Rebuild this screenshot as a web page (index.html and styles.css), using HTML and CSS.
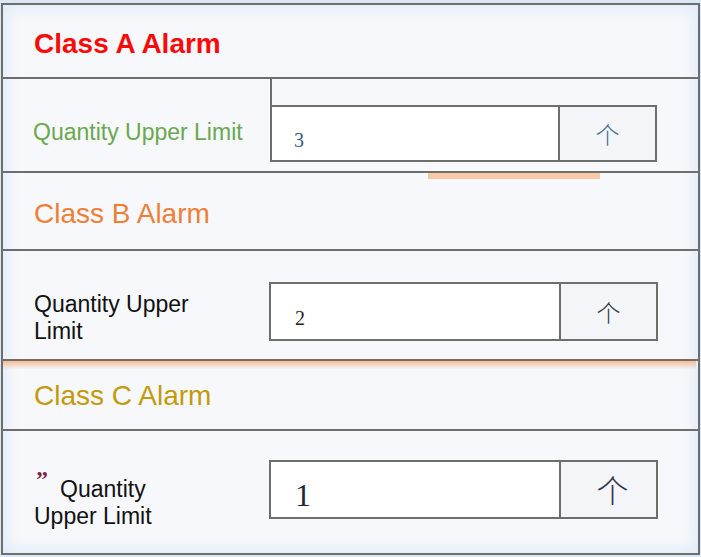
FILE: index.html
```html
<!DOCTYPE html>
<html>
<head>
<meta charset="utf-8">
<link rel="stylesheet" href="styles.css">
</head>
<body>
<div class="frame">
  <div class="head head-a"><span class="title title-a">Class A Alarm</span></div>
  <div class="row row-1">
    <div class="label label-green">Quantity Upper Limit</div>
    <div class="field-wrap">
      <div class="box box-open">
        <div class="value value-3">3</div>
        <div class="btn btn-blue">个</div>
      </div>
    </div>
    <div class="smudge smudge-1"></div>
  </div>
  <div class="head head-b"><span class="title title-b">Class B Alarm</span></div>
  <div class="row row-2">
    <div class="label label-narrow">Quantity Upper Limit</div>
    <div class="box box-full box-2">
      <div class="value value-2">2</div>
      <div class="btn">个</div>
    </div>
    <div class="smudge smudge-2"></div>
  </div>
  <div class="head head-c"><span class="title title-c">Class C Alarm</span></div>
  <div class="row row-3">
    <div class="label label-narrower"><span class="quote">”</span><span class="word">Quantity</span> <span class="word">Upper Limit</span></div>
    <div class="box box-full box-3">
      <div class="value value-1">1</div>
      <div class="btn btn-big">个</div>
    </div>
  </div>
</div>
</body>
</html>
```
FILE: styles.css
```css
html, body {
  margin: 0;
  padding: 0;
}
body {
  background: #dce7f5;
  width: 701px;
  height: 557px;
  overflow: hidden;
  font-family: "Liberation Sans", Arial, sans-serif;
}
.frame {
  position: relative;
  margin: 3px 0 0 1px;
  width: 695px;
  height: 548px;
  border: 2px solid #6e6e6e;
  background: #f6f8fb;
  box-shadow: inset 0 0 14px 4px #e0ebf8;
  display: flex;
  flex-direction: column;
}
.head {
  display: flex;
  align-items: center;
  padding-left: 31px;
  border-bottom: 2px solid #6e6e6e;
  box-sizing: border-box;
}
.head-a { height: 74px; padding-top: 6px; }
.head-b { height: 78px; padding-top: 5px; }
.head-c { height: 70px; padding-top: 2px; }
.title {
  font-size: 28px;
  line-height: 32px;
}
.title-a { color: #fb0a0a; font-weight: bold; }
.title-b { color: #ef7f38; }
.title-c { color: #c49a0c; }
.row {
  position: relative;
  display: flex;
  border-bottom: 2px solid #6e6e6e;
  box-sizing: border-box;
}
.row-1 { height: 94px; }
.row-2 { height: 110px; border-bottom-color: #7a6a5e; }
.row-3 { flex: 1; border-bottom: none; }
.label {
  width: 267px;
  padding-left: 31px;
  font-size: 23px;
  line-height: 27px;
  color: #111;
  align-self: center;
  box-sizing: border-box;
  flex-shrink: 0;
}
.label-green { color: #6aa84f; padding-top: 15px; padding-left: 30px; }
.label-narrow { padding-right: 60px; padding-top: 26px; }
.label-narrower { padding-right: 110px; padding-top: 20px; }
.quote {
  display: inline-block;
  font-family: "Liberation Serif", serif;
  font-weight: bold;
  color: #7a2640;
  font-size: 24px;
  line-height: 10px;
  vertical-align: 10px;
  margin-left: 2px;
  margin-right: 12px;
}
.field-wrap {
  border-left: 2px solid #6e6e6e;
  height: 83px;
  box-sizing: border-box;
  padding-top: 26px;
}
.box {
  display: flex;
  background: #fff;
  box-sizing: border-box;
}
.box-open {
  width: 385px;
  height: 57px;
  border: 2px solid #6e6e6e;
  border-left: none;
}
.box-full {
  width: 389px;
  height: 59px;
  border: 2px solid #6e6e6e;
  margin-left: -1px;
}
.box-2 { margin-top: 31px; }
.box-3 { margin-top: 29px; }
.value {
  flex: 1;
  font-family: "Liberation Serif", "Times New Roman", serif;
  padding-left: 22px;
  display: flex;
  align-items: center;
}
.value-3 { color: #3b5a80; font-size: 20px; padding-top: 14px; }
.value-2 { color: #222; font-size: 20px; padding-left: 24px; padding-top: 13px; }
.value-1 { color: #1e2a3a; font-size: 32px; padding-left: 24px; padding-top: 12px; }
.btn {
  width: 97px;
  box-sizing: border-box;
  border-left: 2px solid #6e6e6e;
  background: #f3f5f9;
  display: flex;
  align-items: center;
  justify-content: center;
  font-family: "Noto Sans CJK SC", sans-serif;
  font-size: 24px;
  font-weight: 300;
  color: #2c3444;
}
.btn-blue { color: #3f6d94; }
.btn-big { font-size: 32px; padding-left: 8px; padding-bottom: 2px; }
.smudge {
  position: absolute;
}
.smudge-1 {
  left: 425px;
  top: 94px;
  width: 172px;
  height: 6px;
  background: #f8c9a2;
}
.smudge-2 {
  left: 0;
  top: 110px;
  width: 693px;
  height: 8px;
  background: linear-gradient(to bottom, rgba(244, 170, 120, 0.75), rgba(248, 210, 180, 0.1));
}
```
